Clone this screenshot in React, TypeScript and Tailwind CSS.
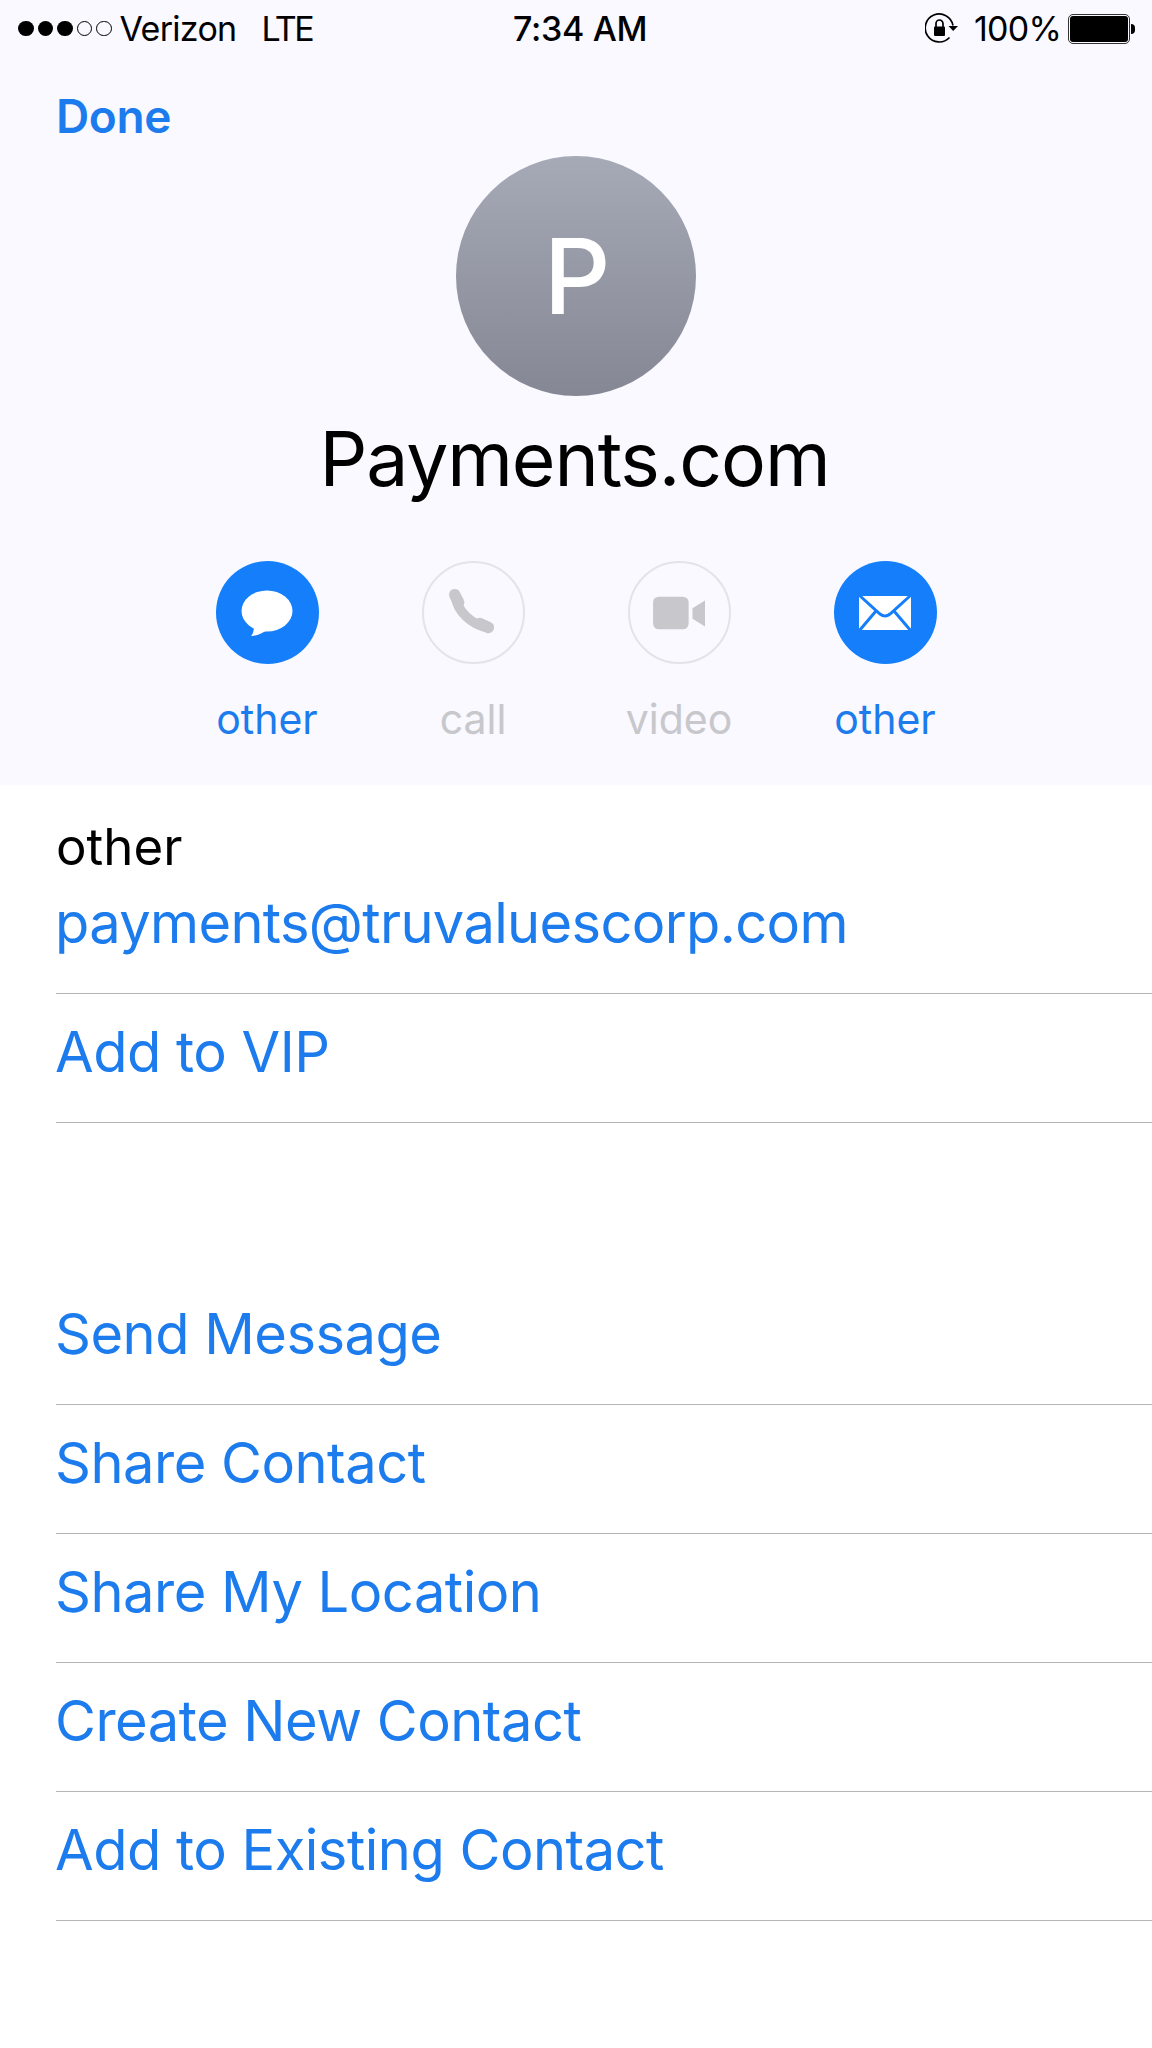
const font = "font-['Inter','Liberation_Sans',sans-serif]"

const Bubble = () => (
    <svg viewBox="0 0 103 103" className="w-full h-full">
        <ellipse cx="51" cy="50" rx="25.5" ry="20.5" fill="#fff" />
        <path d="M38 65C38 69 37 73 35 75C41 75 46 72 50 70Z" fill="#fff" />
    </svg>
)

const Phone = () => (
    <svg viewBox="0 0 103 103" className="w-full h-full" fill="none" stroke="#c7c7cc" strokeLinecap="round">
        <path d="M33 36C35 50 49 64 66 67" strokeWidth="10" />
        <path d="M32 33L36 41" strokeWidth="12" />
        <path d="M58 63L67 67" strokeWidth="12" />
    </svg>
)

const Video = () => (
    <svg viewBox="0 0 103 103" className="w-full h-full" fill="#c7c7cc">
        <rect x="24" y="35" width="37" height="34" rx="6" />
        <path d="M65 47L78 39V66L65 58Z" />
    </svg>
)

const Mail = () => (
    <svg viewBox="0 0 103 103" className="w-full h-full" fill="none">
        <rect x="25" y="35" width="52" height="34" fill="#fff" />
        <path d="M25 34L46 53Q51 57 56 53L77 34" stroke="#147efb" strokeWidth="3" />
        <path d="M25 70L42 50M77 70L60 50" stroke="#147efb" strokeWidth="3" />
    </svg>
)

const actions = [
    { label: 'other', on: true, icon: <Bubble /> },
    { label: 'call', on: false, icon: <Phone /> },
    { label: 'video', on: false, icon: <Video /> },
    { label: 'other', on: true, icon: <Mail /> },
]

const links = ['Send Message', 'Share Contact', 'Share My Location', 'Create New Contact', 'Add to Existing Contact']

const Row = ({ text }: { text: string }) => (
    <div className="h-[129px] flex items-center pb-[12px] border-b border-[#b5b5b8] text-[56px] tracking-[-0.5px] text-[#1c7bed]">
        <span className="-ml-px">{text}</span>
    </div>
)

const App = () => {
    return (
        <div className={`w-[1152px] h-[2048px] bg-white overflow-hidden ${font}`}>
            {/* header */}
            <div className="bg-[#f9f9ff] h-[785px] flex flex-col">
                <div className="h-[57px] flex items-center pl-[18px] pr-[17px] text-[34px] text-black">
                    <div className="w-[495px] flex items-center">
                        <div className="flex gap-[4px]">
                            <span className="w-[15.5px] h-[15.5px] rounded-full bg-black" />
                            <span className="w-[15.5px] h-[15.5px] rounded-full bg-black" />
                            <span className="w-[15.5px] h-[15.5px] rounded-full bg-black" />
                            <span className="w-[15.5px] h-[15.5px] rounded-full border border-black" />
                            <span className="w-[15.5px] h-[15.5px] rounded-full border border-black" />
                        </div>
                        <span className="ml-[8px] tracking-[-0.7px]">Verizon</span>
                        <span className="ml-[25px] tracking-[-2.6px]">LTE</span>
                    </div>
                    <div className="font-medium tracking-[-0.3px]">7:34 AM</div>
                    <div className="ml-auto flex items-center">
                        <svg viewBox="0 0 33 31" className="w-[33px] h-[31px]" fill="none">
                            <path d="M24.5 24.5A14 14 0 1 1 28 12.5" stroke="#000" strokeWidth="1.7" />
                            <path d="M23.5 13H33L28.2 18Z" fill="#000" />
                            <rect x="9" y="13.5" width="11" height="9.5" rx="1" fill="#000" />
                            <path d="M11 14V10.5A3.5 3.5 0 0 1 18 10.5V14" stroke="#000" strokeWidth="1.7" />
                        </svg>
                        <span className="ml-[16px] tracking-[-0.8px]">100%</span>
                        <div className="ml-[7px] flex items-center">
                            <div className="w-[62px] h-[30px] rounded-[5px] border border-[#333] p-[1px]">
                                <div className="w-full h-full rounded-[3px] bg-black" />
                            </div>
                            <div className="w-[4px] h-[10px] rounded-r-full bg-black ml-[1px]" />
                        </div>
                    </div>
                </div>

                <div className="pl-[56px] mt-[34px] text-[46px] leading-[50px] font-semibold tracking-[-0.4px] text-[#1c7bed]">Done</div>

                <div className="self-center mt-[15px] w-[240px] h-[240px] rounded-full bg-gradient-to-b from-[#a6aab6] to-[#858894] flex items-center justify-center pl-[2px] text-[104px] font-medium text-white">P</div>

                <div className="text-center pr-[3px] mt-[21px] text-[75px] leading-[84px] tracking-[-1.1px] text-black">Payments.com</div>

                <div className="flex justify-center gap-[103px] mt-[60px]">
                    {actions.map((a, i) => (
                        <div key={i} className="w-[103px] flex flex-col items-center">
                            <div className={a.on ? 'w-[103px] h-[103px] rounded-full bg-[#147efb]' : 'w-[103px] h-[103px] rounded-full border-2 border-[#e3e3e8]'}>
                                {a.icon}
                            </div>
                            <div className={a.on ? 'mt-[26px] text-[41px] leading-[58px] text-[#1c7bed]' : 'mt-[26px] text-[41px] leading-[58px] text-[#c7c7cc]'}>{a.label}</div>
                        </div>
                    ))}
                </div>
            </div>

            {/* email */}
            <div className="pl-[56px]">
                <div className="h-[209px] border-b border-[#b5b5b8] flex flex-col">
                    <div className="mt-[32px] text-[51px] leading-[60px] text-black">other</div>
                    <div className="-ml-px mt-[14px] text-[56px] leading-[64px] tracking-[-0.65px] text-[#1c7bed]">payments@truvaluescorp.com</div>
                </div>
                <Row text="Add to VIP" />

                <div className="h-[153px]" />

                {links.map((t) => (
                    <Row key={t} text={t} />
                ))}
            </div>
        </div>
    )
}

export default App
